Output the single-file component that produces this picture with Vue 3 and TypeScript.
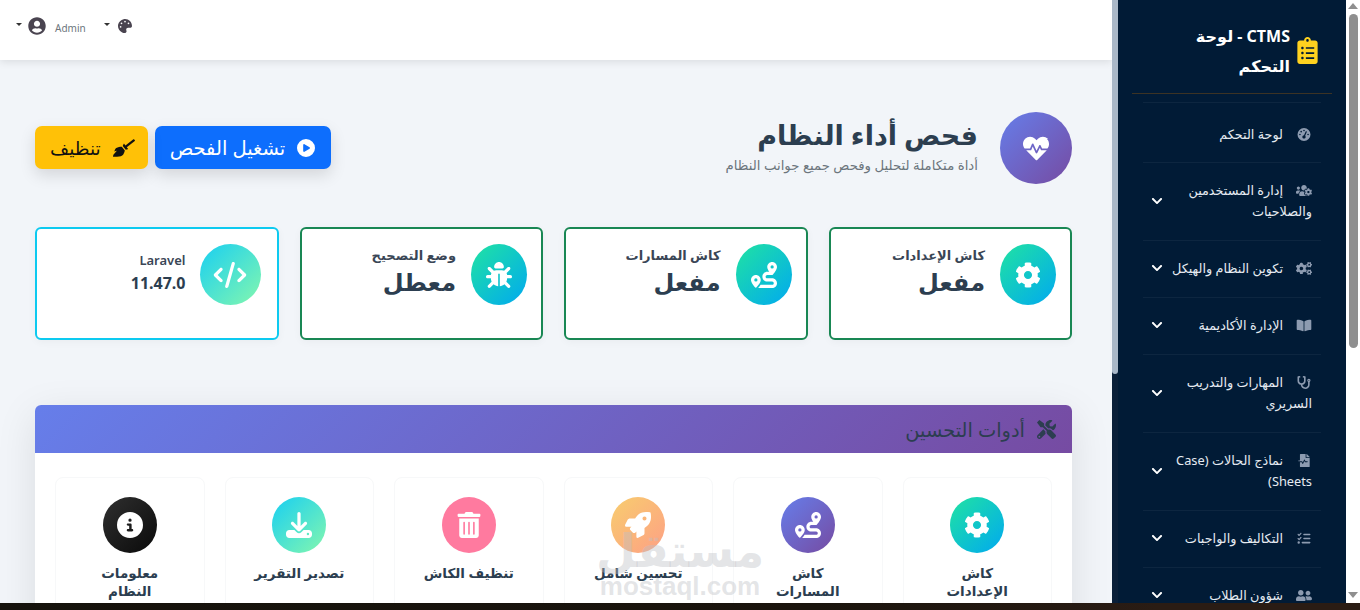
<script setup lang="ts">
interface Icon {
    vb: string;
    d: string;
}

const icons: Record<string, Icon> = {
    user: { vb: '0 0 496 512', d: 'M248 8C111 8 0 119 0 256s111 248 248 248 248-111 248-248S385 8 248 8zm0 96c48.6 0 88 39.4 88 88s-39.4 88-88 88-88-39.4-88-88 39.4-88 88-88zm0 344c-58.7 0-111.3-26.6-146.5-68.2 18.8-35.4 55.6-59.8 98.5-59.8 2.4 0 4.8.4 7.1 1.1 13 4.2 26.6 6.9 40.9 6.9 14.3 0 28-2.7 40.9-6.9 2.3-.7 4.7-1.1 7.1-1.1 42.9 0 79.7 24.4 98.5 59.8C359.3 421.4 306.7 448 248 448z' },
    palette: { vb: '0 0 512 512', d: 'M204.3 5C104.9 24.4 24.8 104.3 5.2 203.4c-37 187 131.7 326.4 258.8 306.7 41.2-6.4 61.4-54.6 42.5-91.7-23.1-45.4 9.9-98.4 60.9-98.4h79.7c35.8 0 64.8-29.6 64.9-65.3C511.5 97.1 368.1-26.9 204.3 5zM96 320c-17.7 0-32-14.3-32-32s14.3-32 32-32 32 14.3 32 32-14.3 32-32 32zm32-128c-17.7 0-32-14.3-32-32s14.3-32 32-32 32 14.3 32 32-14.3 32-32 32zm128-64c-17.7 0-32-14.3-32-32s14.3-32 32-32 32 14.3 32 32-14.3 32-32 32zm128 64c-17.7 0-32-14.3-32-32s14.3-32 32-32 32 14.3 32 32-14.3 32-32 32z' },
    play: { vb: '0 0 512 512', d: 'M0 256a256 256 0 1 1 512 0A256 256 0 1 1 0 256zM188.3 147.1c-7.6 4.2-12.3 12.3-12.3 20.9V344c0 8.7 4.7 16.7 12.3 20.9s16.8 4.1 24.3-.5l144-88c7.1-4.4 11.5-12.1 11.5-20.5s-4.4-16.1-11.5-20.5l-144-88c-7.4-4.5-16.7-4.7-24.3-.5z' },
    broom: { vb: '0 0 640 512', d: 'M256.47 216.77l86.73 109.18s-16.6 102.36-76.57 150.12C206.66 523.85 0 510.19 0 510.19s3.8-23.14 11-55.43l94.62-112.17c3.97-4.7-.87-11.62-6.65-9.5l-60.4 22.09c14.44-41.66 32.72-80.04 54.6-97.47 59.97-47.76 163.3-40.94 163.3-40.94zM636.53 31.03l-19.86-25c-5.49-6.9-15.52-8.05-22.41-2.56l-232.48 177.8-34.14-42.97c-5.09-6.41-15.14-5.21-18.59 2.21l-25.33 54.55 86.73 109.18 58.8-12.45c8-1.69 11.42-11.2 6.34-17.6l-34.09-42.92 232.48-177.8c6.89-5.48 8.04-15.53 2.55-22.44z' },
    heartbeat: { vb: '0 0 512 512', d: 'M320.2 243.8l-49.7 99.4c-6 12.1-23.4 11.7-28.9-.6l-56.9-126.3-30 71.7H60.6l182.5 186.5c7.1 7.3 18.6 7.3 25.7 0L451.4 288H342.3l-22.1-44.2zM473.7 73.9l-2.4-2.5c-51.5-52.6-135.8-52.6-187.4 0L256 100l-27.9-28.5c-51.5-52.7-135.9-52.7-187.4 0l-2.4 2.4C-10.4 123.7-12.5 203 31 256h102.4l35.9-86.2c5.4-12.9 23.6-13.2 29.4-.4l58.2 129.3 49-97.9c5.9-11.8 22.7-11.8 28.6 0l27.6 55.2h100.5c43.4-53 41.3-132.3-7.9-182.1z' },
    cog: { vb: '0 0 512 512', d: 'M487.4 315.7l-42.6-24.6c4.3-23.2 4.3-47 0-70.2l42.6-24.6c4.9-2.8 7.1-8.6 5.5-14-11.1-35.6-30-67.8-54.7-94.6-3.8-4.1-10-5.1-14.8-2.3L380.8 110c-17.9-15.4-38.5-27.3-60.8-35.1V25.8c0-5.6-3.9-10.5-9.4-11.7-36.7-8.2-74.3-7.8-109.2 0-5.5 1.2-9.4 6.1-9.4 11.7V75c-22.2 7.9-42.8 19.8-60.8 35.1L88.7 85.5c-4.9-2.8-11-1.9-14.8 2.3-24.7 26.7-43.6 58.9-54.7 94.6-1.7 5.4.6 11.2 5.5 14L67.3 221c-4.3 23.2-4.3 47 0 70.2l-42.6 24.6c-4.9 2.8-7.1 8.6-5.5 14 11.1 35.6 30 67.8 54.7 94.6 3.8 4.1 10 5.1 14.8 2.3l42.6-24.6c17.9 15.4 38.5 27.3 60.8 35.1v49.2c0 5.6 3.9 10.5 9.4 11.7 36.7 8.2 74.3 7.8 109.2 0 5.5-1.2 9.4-6.1 9.4-11.7v-49.2c22.2-7.9 42.8-19.8 60.8-35.1l42.6 24.6c4.9 2.8 11 1.9 14.8-2.3 24.7-26.7 43.6-58.9 54.7-94.6 1.5-5.5-.7-11.3-5.6-14.1zM256 336c-44.1 0-80-35.9-80-80s35.9-80 80-80 80 35.9 80 80-35.9 80-80 80z' },
    route: { vb: '0 0 512 512', d: 'M512 96c0 50.2-59.1 125.1-84.6 155c-3.8 4.4-9.4 6.1-14.5 5H320c-17.7 0-32 14.3-32 32s14.3 32 32 32h96c53 0 96 43 96 96s-43 96-96 96H139.6c8.7-9.9 19.3-22.6 30-36.8c6.3-8.4 12.8-17.6 19-27.2H416c17.7 0 32-14.3 32-32s-14.3-32-32-32H320c-53 0-96-43-96-96s43-96 96-96h39.8c-21-31.5-39.8-67.7-39.8-96c0-53 43-96 96-96s96 43 96 96zM117.1 489.1c-3.8 4.3-7.2 8.1-10.1 11.3l-1.8 2-.2-.2c-6 4.6-14.6 4-20-1.8C59.8 473 0 402.5 0 352c0-53 43-96 96-96s96 43 96 96c0 30-21.1 67-43.5 97.9c-10.7 14.7-21.7 28-30.8 38.5l-.6 .7zM128 352a32 32 0 1 0 -64 0 32 32 0 1 0 64 0zM416 128a32 32 0 1 0 0-64 32 32 0 1 0 0 64z' },
    bug: { vb: '0 0 512 512', d: 'M256 0c53 0 96 43 96 96v3.6c0 15.7-12.7 28.4-28.4 28.4H188.4c-15.7 0-28.4-12.7-28.4-28.4V96c0-53 43-96 96-96zM41.4 105.4c12.5-12.5 32.8-12.5 45.3 0l64 64c.7 .7 1.3 1.4 1.9 2.1c14.2-7.3 30.4-11.4 47.5-11.4H312c17.1 0 33.2 4.1 47.5 11.4c.6-.7 1.2-1.4 1.9-2.1l64-64c12.5-12.5 32.8-12.5 45.3 0s12.5 32.8 0 45.3l-64 64c-.7 .7-1.4 1.3-2.1 1.9c6.2 12 10.1 25.3 11.1 39.5H480c17.7 0 32 14.3 32 32s-14.3 32-32 32H416c0 24.6-5.5 47.8-15.4 68.6c2.2 1.3 4.2 2.9 6 4.8l64 64c12.5 12.5 12.5 32.8 0 45.3s-32.8 12.5-45.3 0l-63.1-63.1c-24.5 21.8-55.8 36.2-90.3 39.6V240c0-8.8-7.2-16-16-16s-16 7.2-16 16V479.2c-34.5-3.4-65.8-17.8-90.3-39.6L86.6 502.6c-12.5 12.5-32.8 12.5-45.3 0s-12.5-32.8 0-45.3l64-64c1.9-1.9 3.9-3.4 6-4.8C101.5 367.8 96 344.6 96 320H32c-17.7 0-32-14.3-32-32s14.3-32 32-32H96.3c1.1-14.1 5-27.5 11.1-39.5c-.7-.6-1.4-1.2-2.1-1.9l-64-64c-12.5-12.5-12.5-32.8 0-45.3z' },
    code: { vb: '0 0 640 512', d: 'M392.8 1.2c-17-4.9-34.7 5-39.6 22l-128 448c-4.9 17 5 34.7 22 39.6s34.7-5 39.6-22l128-448c4.9-17-5-34.7-22-39.6zm80.6 120.1c-12.5 12.5-12.5 32.8 0 45.3L562.7 256l-89.4 89.4c-12.5 12.5-12.5 32.8 0 45.3s32.8 12.5 45.3 0l112-112c12.5-12.5 12.5-32.8 0-45.3l-112-112c-12.5-12.5-32.8-12.5-45.3 0zm-306.7 0c-12.5-12.5-32.8-12.5-45.3 0l-112 112c-12.5 12.5-12.5 32.8 0 45.3l112 112c12.5 12.5 32.8 12.5 45.3 0s12.5-32.8 0-45.3L77.3 256l89.4-89.4c12.5-12.5 12.5-32.8 0-45.3z' },
    tools: { vb: '0 0 512 512', d: 'M501.1 395.7L384 278.6c-23.1-23.1-57.6-27.6-85.4-13.9L192 158.1V96L64 0 0 64l96 128h62.1l106.6 106.6c-13.6 27.8-9.2 62.3 13.9 85.4l117.1 117.1c14.6 14.6 38.2 14.6 52.7 0l52.7-52.7c14.5-14.6 14.5-38.2 0-52.7zM331.7 225c28.3 0 54.9 11 74.9 31l19.4 19.4c15.8-6.9 30.8-16.5 43.8-29.5 37.1-37.1 49.7-89.3 37.9-136.7-2.2-9-13.5-12.1-20.1-5.5l-74.4 74.4-67.9-11.3L334 98.9l74.4-74.4c6.6-6.6 3.4-17.9-5.7-20.2-47.4-11.7-99.6.9-136.6 37.9-28.5 28.5-41.9 66.1-41.2 103.6l82.1 82.1c8.1-1.9 16.5-2.9 24.7-2.9zm-103.9 82l-56.7-56.7L18.7 402.8c-25 25-25 65.5 0 90.5s65.5 25 90.5 0l123.6-123.6c-7.6-19.9-9.9-41.6-5-62.7zM64 472c-13.2 0-24-10.8-24-24 0-13.3 10.7-24 24-24s24 10.7 24 24c0 13.2-10.7 24-24 24z' },
    rocket: { vb: '0 0 512 512', d: 'M505.12019,19.09375c-1.18945-5.53125-6.65819-11-12.207-12.1875C460.716,0,435.507,0,410.40747,0,307.17523,0,245.26909,55.20312,199.05238,128H94.83772c-16.34763.01562-35.55658,11.875-42.88664,26.48438L2.51562,253.29688A28.4,28.4,0,0,0,0,264a24.00867,24.00867,0,0,0,24.00582,24H127.81618l-22.47457,22.46875c-11.36521,11.36133-12.99607,32.25781,0,45.25L156.24582,406.625c11.15623,11.1875,32.15619,13.15625,45.27726,0l22.47457-22.46875V488a24.00867,24.00867,0,0,0,24.00581,24,28.55934,28.55934,0,0,0,10.707-2.51562l98.72834-49.39063c14.62888-7.29687,26.50776-26.5,26.50776-42.85937V312.79688c72.59753-46.3125,128.03493-108.40626,128.03493-211.09376C512.07526,76.5,512.07526,51.29688,505.12019,19.09375ZM384.04033,168A40,40,0,1,1,424.05,128,40.02322,40.02322,0,0,1,384.04033,168Z' },
    trash: { vb: '0 0 448 512', d: 'M32 464a48 48 0 0 0 48 48h288a48 48 0 0 0 48-48V128H32zm272-256a16 16 0 0 1 32 0v224a16 16 0 0 1-32 0zm-96 0a16 16 0 0 1 32 0v224a16 16 0 0 1-32 0zm-96 0a16 16 0 0 1 32 0v224a16 16 0 0 1-32 0zM432 32H312l-9.4-18.7A24 24 0 0 0 281.1 0H166.8a23.72 23.72 0 0 0-21.4 13.3L136 32H16A16 16 0 0 0 0 48v32a16 16 0 0 0 16 16h416a16 16 0 0 0 16-16V48a16 16 0 0 0-16-16z' },
    download: { vb: '0 0 512 512', d: 'M288 32c0-17.7-14.3-32-32-32s-32 14.3-32 32V274.7l-73.4-73.4c-12.5-12.5-32.8-12.5-45.3 0s-12.5 32.8 0 45.3l128 128c12.5 12.5 32.8 12.5 45.3 0l128-128c12.5-12.5 12.5-32.8 0-45.3s-32.8-12.5-45.3 0L288 274.7V32zM64 352c-35.3 0-64 28.7-64 64v32c0 35.3 28.7 64 64 64H448c35.3 0 64-28.7 64-64V416c0-35.3-28.7-64-64-64H346.5l-45.3 45.3c-25 25-65.5 25-90.5 0L165.5 352H64zm368 56a24 24 0 1 1 0 48 24 24 0 1 1 0-48z' },
    info: { vb: '0 0 512 512', d: 'M256 512A256 256 0 1 0 256 0a256 256 0 1 0 0 512zM216 336h24V272H216c-13.3 0-24-10.7-24-24s10.7-24 24-24h48c13.3 0 24 10.7 24 24v88h8c13.3 0 24 10.7 24 24s-10.7 24-24 24H216c-13.3 0-24-10.7-24-24s10.7-24 24-24zm40-208a32 32 0 1 1 0 64 32 32 0 1 1 0-64z' },
    clipboard: { vb: '0 0 384 512', d: 'M336 64h-80c0-35.3-28.7-64-64-64s-64 28.7-64 64H48C21.5 64 0 85.5 0 112v352c0 26.5 21.5 48 48 48h288c26.5 0 48-21.5 48-48V112c0-26.5-21.5-48-48-48zM96 424c-13.3 0-24-10.7-24-24s10.7-24 24-24 24 10.7 24 24-10.7 24-24 24zm0-96c-13.3 0-24-10.7-24-24s10.7-24 24-24 24 10.7 24 24-10.7 24-24 24zm0-96c-13.3 0-24-10.7-24-24s10.7-24 24-24 24 10.7 24 24-10.7 24-24 24zm96-192c13.3 0 24 10.7 24 24s-10.7 24-24 24-24-10.7-24-24 10.7-24 24-24zm128 368c0 4.4-3.6 8-8 8H168c-4.4 0-8-3.6-8-8v-16c0-4.4 3.6-8 8-8h144c4.4 0 8 3.6 8 8v16zm0-96c0 4.4-3.6 8-8 8H168c-4.4 0-8-3.6-8-8v-16c0-4.4 3.6-8 8-8h144c4.4 0 8 3.6 8 8v16zm0-96c0 4.4-3.6 8-8 8H168c-4.4 0-8-3.6-8-8v-16c0-4.4 3.6-8 8-8h144c4.4 0 8 3.6 8 8v16z' },
    gauge: { vb: '0 0 512 512', d: 'M0 256a256 256 0 1 1 512 0A256 256 0 1 1 0 256zM288 96a32 32 0 1 0 -64 0 32 32 0 1 0 64 0zM256 416c35.3 0 64-28.7 64-64c0-17.4-6.9-33.1-18.1-44.6L366 161.7c5.3-12.1-.2-26.3-12.3-31.6s-26.3 .2-31.6 12.3L257.9 288c-.6 0-1.3 0-1.9 0c-35.3 0-64 28.7-64 64s28.7 64 64 64zM176 144a32 32 0 1 0 -64 0 32 32 0 1 0 64 0zM96 288a32 32 0 1 0 0-64 32 32 0 1 0 0 64zm352-32a32 32 0 1 0 -64 0 32 32 0 1 0 64 0z' },
    usersCog: { vb: '0 0 640 512', d: 'M610.5 341.3c2.6-14.1 2.6-28.5 0-42.6l25.8-14.9c3-1.7 4.3-5.2 3.3-8.5-6.7-21.5-18.2-41-33.2-57.1-2.3-2.5-6-3.1-9-1.4l-25.8 14.9c-10.9-9.3-23.4-16.5-36.9-21.3v-29.8c0-3.4-2.4-6.4-5.7-7.1-22.3-5-45-4.8-66.2 0-3.3.7-5.7 3.7-5.7 7.1v29.8c-13.5 4.8-26 12-36.9 21.3l-25.8-14.9c-2.9-1.7-6.7-1.1-9 1.4-15 16.1-26.5 35.6-33.2 57.1-1 3.3.4 6.8 3.3 8.5l25.8 14.9c-2.6 14.1-2.6 28.5 0 42.6l-25.8 14.9c-3 1.7-4.3 5.2-3.3 8.5 6.7 21.5 18.2 41 33.2 57.1 2.3 2.5 6 3.1 9 1.4l25.8-14.9c10.9 9.3 23.4 16.5 36.9 21.3v29.8c0 3.4 2.4 6.4 5.7 7.1 22.3 5 45 4.8 66.2 0 3.3-.7 5.7-3.7 5.7-7.1v-29.8c13.5-4.8 26-12 36.9-21.3l25.8 14.9c2.9 1.7 6.7 1.1 9-1.4 15-16.1 26.5-35.6 33.2-57.1 1-3.3-.4-6.8-3.3-8.5l-25.8-14.9zM496 368.5c-26.8 0-48.5-21.8-48.5-48.5s21.8-48.5 48.5-48.5 48.5 21.8 48.5 48.5-21.7 48.5-48.5 48.5zM96 224c35.3 0 64-28.7 64-64s-28.7-64-64-64-64 28.7-64 64 28.7 64 64 64zm224 32c1.9 0 3.7-.5 5.6-.6 8.3-21.7 20.5-42.1 36.3-59.2 7.4-8 17.9-12.6 28.9-12.6 6.9 0 13.7 1.8 19.6 5.3l7.9 4.6c.8-.5 1.6-.9 2.4-1.4 7-14.6 11.2-30.8 11.2-48 0-61.9-50.1-112-112-112S208 82.1 208 144c0 61.9 50.1 112 112 112zm105.2 194.5c-2.3-1.2-4.6-2.6-6.8-3.9-8.2 4.8-15.3 9.8-27.5 9.8-10.9 0-21.4-4.6-28.9-12.6-18.3-19.8-32.3-43.9-40.2-69.6-10.7-34.5 24.9-49.7 25.8-50.3-.1-2.6-.1-5.2 0-7.8l-7.9-4.6c-3.8-2.2-7-5-9.8-8.1-3.3.2-6.5.6-9.8.6-24.6 0-47.6-6-68.5-16h-8.3C179.6 288 128 339.6 128 403.2V432c0 26.5 21.5 48 48 48h255.4c-3.7-6-6.2-12.8-6.2-20.3v-9.2zM173.1 274.6C161.5 263.1 145.6 256 128 256H64c-35.3 0-64 28.7-64 64v32c0 17.7 14.3 32 32 32h65.9c6.3-47.4 34.9-87.3 75.2-109.4z' },
    cogs: { vb: '0 0 640 512', d: 'M512.1 191l-8.2 14.3c-3 5.3-9.4 7.5-15.1 5.4-11.8-4.4-22.6-10.7-32.1-18.6-4.6-3.8-5.8-10.5-2.8-15.7l8.2-14.3c-6.9-8-12.3-17.3-15.9-27.4h-16.5c-6 0-11.2-4.3-12.2-10.3-2-12-2.1-24.6 0-37.1 1-6 6.2-10.4 12.2-10.4h16.5c3.6-10.1 9-19.4 15.9-27.4l-8.2-14.3c-3-5.2-1.9-11.9 2.8-15.7 9.5-7.9 20.4-14.2 32.1-18.6 5.7-2.1 12.1.1 15.1 5.4l8.2 14.3c10.5-1.9 21.2-1.9 31.7 0L552 6.3c3-5.3 9.4-7.5 15.1-5.4 11.8 4.4 22.6 10.7 32.1 18.6 4.6 3.8 5.8 10.5 2.8 15.7l-8.2 14.3c6.9 8 12.3 17.3 15.9 27.4h16.5c6 0 11.2 4.3 12.2 10.3 2 12 2.1 24.6 0 37.1-1 6-6.2 10.4-12.2 10.4h-16.5c-3.6 10.1-9 19.4-15.9 27.4l8.2 14.3c3 5.2 1.9 11.9-2.8 15.7-9.5 7.9-20.4 14.2-32.1 18.6-5.7 2.1-12.1-.1-15.1-5.4l-8.2-14.3c-10.4 1.9-21.2 1.9-31.7 0zm-10.5-58.8c38.5 29.6 82.4-14.3 52.8-52.8-38.5-29.7-82.4 14.3-52.8 52.8zM386.3 286.1l33.7 16.8c10.1 5.8 14.5 18.1 10.5 29.1-8.9 24.2-26.4 46.4-42.6 65.8-7.4 8.9-20.2 11.1-30.3 5.3l-29.1-16.8c-16 13.7-34.6 24.6-54.9 31.7v33.6c0 11.6-8.3 21.6-19.7 23.6-24.6 4.2-50.4 4.4-75.9 0-11.5-2-20-11.9-20-23.6V418c-20.3-7.2-38.9-18-54.9-31.7L74 403c-10 5.8-22.9 3.6-30.3-5.3-16.2-19.4-33.3-41.6-42.2-65.7-4-10.9.4-23.2 10.5-29.1l33.3-16.8c-3.9-20.9-3.9-42.4 0-63.4L12 205.8c-10.1-5.8-14.6-18.1-10.5-29 8.9-24.2 26-46.4 42.2-65.8 7.4-8.9 20.2-11.1 30.3-5.3l29.1 16.8c16-13.7 34.6-24.6 54.9-31.7V57.1c0-11.5 8.2-21.5 19.6-23.5 24.6-4.2 50.5-4.4 76-.1 11.5 2 20 11.9 20 23.6v33.6c20.3 7.2 38.9 18 54.9 31.7l29.1-16.8c10-5.8 22.9-3.6 30.3 5.3 16.2 19.4 33.2 41.6 42.1 65.8 4 10.9.1 23.2-10 29.1l-33.7 16.8c3.9 21 3.9 42.5 0 63.5zm-117.6 21.1c59.2-77-28.7-164.9-105.7-105.7-59.2 77 28.7 164.9 105.7 105.7zm243.4 182.7l-8.2 14.3c-3 5.3-9.4 7.5-15.1 5.4-11.8-4.4-22.6-10.7-32.1-18.6-4.6-3.8-5.8-10.5-2.8-15.7l8.2-14.3c-6.9-8-12.3-17.3-15.9-27.4h-16.5c-6 0-11.2-4.3-12.2-10.3-2-12-2.1-24.6 0-37.1 1-6 6.2-10.4 12.2-10.4h16.5c3.6-10.1 9-19.4 15.9-27.4l-8.2-14.3c-3-5.2-1.9-11.9 2.8-15.7 9.5-7.9 20.4-14.2 32.1-18.6 5.7-2.1 12.1.1 15.1 5.4l8.2 14.3c10.5-1.9 21.2-1.9 31.7 0l8.2-14.3c3-5.3 9.4-7.5 15.1-5.4 11.8 4.4 22.6 10.7 32.1 18.6 4.6 3.8 5.8 10.5 2.8 15.7l-8.2 14.3c6.9 8 12.3 17.3 15.9 27.4h16.5c6 0 11.2 4.3 12.2 10.3 2 12 2.1 24.6 0 37.1-1 6-6.2 10.4-12.2 10.4h-16.5c-3.6 10.1-9 19.4-15.9 27.4l8.2 14.3c3 5.2 1.9 11.9-2.8 15.7-9.5 7.9-20.4 14.2-32.1 18.6-5.7 2.1-12.1-.1-15.1-5.4l-8.2-14.3c-10.4 1.9-21.2 1.9-31.7 0zM501.6 431c38.5 29.6 82.4-14.3 52.8-52.8-38.5-29.6-82.4 14.3-52.8 52.8z' },
    book: { vb: '0 0 576 512', d: 'M542.22 32.05c-54.8 3.11-163.72 14.43-230.96 55.59-4.64 2.84-7.27 7.89-7.27 13.17v363.87c0 11.55 12.63 18.85 23.28 13.49 69.18-34.82 169.23-44.32 218.7-46.92 16.89-.89 30.02-14.43 30.02-30.66V62.75c.01-17.71-15.35-31.74-33.77-30.7zM264.73 87.64C197.5 46.48 88.58 35.17 33.78 32.05 15.36 31.01 0 45.04 0 62.75V400.6c0 16.24 13.13 29.78 30.02 30.66 49.49 2.6 149.59 12.11 218.77 46.95 10.62 5.35 23.21-1.94 23.21-13.46V100.63c0-5.29-2.62-10.14-7.27-12.99z' },
    stethoscope: { vb: '0 0 512 512', d: 'M447.1 112c-34.2.5-62.3 28.4-63 62.6-.5 24.3 12.5 45.6 32 56.8V344c0 57.3-50.2 104-112 104-60 0-109.2-44.1-111.9-99.2C265 333.8 320 269.2 320 192V36.6c0-11.4-8.1-21.3-19.3-23.5L237.8.5c-13-2.6-25.6 5.8-28.2 18.8L206.4 35c-2.6 13 5.8 25.6 18.8 28.2l30.7 6.1v121.4c0 52.9-42.2 96.7-95.1 97.2-53.4.5-96.9-42.7-96.9-96V69.4l30.7-6.1c13-2.6 21.4-15.2 18.8-28.2l-3.1-15.7C107.7 6.4 95.1-2 82.1.6L19.3 13C8.1 15.3 0 25.1 0 36.6V192c0 77.3 55.1 142 128.1 156.8C130.7 439.2 208.6 512 304 512c97 0 176-75.4 176-168V231.4c19.1-11.1 32-31.7 32-55.4 0-35.7-29.2-64.5-64.9-64zm.9 80c-8.8 0-16-7.2-16-16s7.2-16 16-16 16 7.2 16 16-7.2 16-16 16z' },
    fileMedical: { vb: '0 0 448 512', d: 'M288 136V0H88C74.7 0 64 10.7 64 24v232H8c-4.4 0-8 3.6-8 8v16c0 4.4 3.6 8 8 8h140.9c3 0 5.8 1.7 7.2 4.4l19.9 39.8 56.8-113.7c2.9-5.9 11.4-5.9 14.3 0l34.7 69.5H352c8.8 0 16 7.2 16 16s-7.2 16-16 16h-89.9L240 275.8l-56.8 113.7c-2.9 5.9-11.4 5.9-14.3 0L134.1 320H64v168c0 13.3 10.7 24 24 24h336c13.3 0 24-10.7 24-24V160H312c-13.2 0-24-10.8-24-24zm153-31L343.1 7c-4.5-4.5-10.6-7-17-7H320v128h128v-6.1c0-6.3-2.5-12.4-7-16.9z' },
    tasks: { vb: '0 0 512 512', d: 'M152.1 38.2c9.9 8.9 10.7 24 1.8 33.9l-72 80c-4.4 4.9-10.6 7.8-17.2 7.9s-12.9-2.4-17.6-7L7 113C-2.3 103.6-2.3 88.4 7 79s24.6-9.4 33.9 0l22.1 22.1 55.1-61.2c8.9-9.9 24-10.7 33.9-1.8zm0 160c9.9 8.9 10.7 24 1.8 33.9l-72 80c-4.4 4.9-10.6 7.8-17.2 7.9s-12.9-2.4-17.6-7L7 273c-9.4-9.4-9.4-24.6 0-33.9s24.6-9.4 33.9 0l22.1 22.1 55.1-61.2c8.9-9.9 24-10.7 33.9-1.8zM224 96c0-17.7 14.3-32 32-32H480c17.7 0 32 14.3 32 32s-14.3 32-32 32H256c-17.7 0-32-14.3-32-32zm0 160c0-17.7 14.3-32 32-32H480c17.7 0 32 14.3 32 32s-14.3 32-32 32H256c-17.7 0-32-14.3-32-32zM160 416c0-17.7 14.3-32 32-32H480c17.7 0 32 14.3 32 32s-14.3 32-32 32H192c-17.7 0-32-14.3-32-32zM48 368a48 48 0 1 1 0 96 48 48 0 1 1 0-96z' },
    friends: { vb: '0 0 640 512', d: 'M192 256c61.9 0 112-50.1 112-112S253.9 32 192 32 80 82.1 80 144s50.1 112 112 112zm76.8 32h-8.3c-20.8 10-43.9 16-68.5 16s-47.6-6-68.5-16h-8.3C51.6 288 0 339.6 0 403.2V432c0 26.5 21.5 48 48 48h288c26.5 0 48-21.5 48-48v-28.8c0-63.6-51.6-115.2-115.2-115.2zM480 256c53 0 96-43 96-96s-43-96-96-96-96 43-96 96 43 96 96 96zm48 32h-3.8c-13.9 4.8-28.6 8-44.2 8s-30.3-3.2-44.2-8H432c-20.4 0-39.2 5.9-55.7 15.4 24.4 26.3 39.7 61.2 39.7 99.8v38.4c0 2.2-.5 4.3-.6 6.4H592c26.5 0 48-21.5 48-48 0-61.9-50.1-112-112-112z' },
    chevron: { vb: '0 0 448 512', d: 'M207.029 381.476L12.686 187.132c-9.373-9.373-9.373-24.569 0-33.941l22.667-22.667c9.357-9.357 24.522-9.375 33.901-.04L224 284.505l154.745-154.021c9.379-9.335 24.544-9.317 33.901.04l22.667 22.667c9.373 9.373 9.373 24.569 0 33.941L240.971 381.476c-9.373 9.372-24.569 9.372-33.942 0z' },
};

const statusCards = [
    { label: 'كاش الإعدادات', value: 'مفعل', icon: 'cog', tone: 'green' },
    { label: 'كاش المسارات', value: 'مفعل', icon: 'route', tone: 'green' },
    { label: 'وضع التصحيح', value: 'معطل', icon: 'bug', tone: 'green' },
    { label: 'Laravel', value: '11.47.0', icon: 'code', tone: 'cyan' },
];

const tools = [
    { lines: ['كاش', 'الإعدادات'], icon: 'cog', tone: 'green' },
    { lines: ['كاش', 'المسارات'], icon: 'route', tone: 'purple' },
    { lines: ['تحسين شامل'], icon: 'rocket', tone: 'orange' },
    { lines: ['تنظيف الكاش'], icon: 'trash', tone: 'pink' },
    { lines: ['تصدير التقرير'], icon: 'download', tone: 'cyan' },
    { lines: ['معلومات', 'النظام'], icon: 'info', tone: 'dark' },
];

const menu = [
    { label: 'لوحة التحكم', icon: 'gauge', arrow: false },
    { label: 'إدارة المستخدمين\nوالصلاحيات', icon: 'usersCog', arrow: true },
    { label: 'تكوين النظام والهيكل', icon: 'cogs', arrow: true },
    { label: 'الإدارة الأكاديمية', icon: 'book', arrow: true },
    { label: 'المهارات والتدريب\nالسريري', icon: 'stethoscope', arrow: true },
    { label: 'نماذج الحالات (Case\nSheets)', icon: 'fileMedical', arrow: true },
    { label: 'التكاليف والواجبات', icon: 'tasks', arrow: true },
    { label: 'شؤون الطلاب', icon: 'friends', arrow: true },
];

function rowHeight(label: string, index: number) {
    if (index === 0) return '60px';
    return label.includes('\n') ? '78px' : '57px';
}
</script>

<template>
    <div class="screen">
        <div class="window">
            <main class="main">
                <header class="topbar">
                    <span class="caret"></span>
                    <svg class="topbar__user" :viewBox="icons.user.vb"><path :d="icons.user.d" /></svg>
                    <span class="topbar__name">Admin</span>
                    <span class="caret caret--second"></span>
                    <svg class="topbar__palette" :viewBox="icons.palette.vb"><path :d="icons.palette.d" /></svg>
                </header>

                <div class="content" dir="rtl">
                    <section class="pageHead">
                        <div class="pageHead__title">
                            <div class="pageHead__badge">
                                <svg :viewBox="icons.heartbeat.vb"><path :d="icons.heartbeat.d" /></svg>
                            </div>
                            <div class="pageHead__text">
                                <h1>فحص أداء النظام</h1>
                                <p>أداة متكاملة لتحليل وفحص جميع جوانب النظام</p>
                            </div>
                        </div>
                        <div class="pageHead__actions">
                            <button class="btn btn--blue">
                                <svg :viewBox="icons.play.vb"><path :d="icons.play.d" /></svg>
                                تشغيل الفحص
                            </button>
                            <button class="btn btn--yellow">
                                <svg class="btn__broom" :viewBox="icons.broom.vb"><path :d="icons.broom.d" /></svg>
                                تنظيف
                            </button>
                        </div>
                    </section>

                    <section class="stats">
                        <div
                            v-for="card in statusCards"
                            :key="card.label"
                            class="stat"
                            :class="'stat--' + card.tone"
                        >
                            <div class="stat__icon">
                                <svg :viewBox="icons[card.icon].vb"><path :d="icons[card.icon].d" /></svg>
                            </div>
                            <div class="stat__text">
                                <div class="stat__label">{{ card.label }}</div>
                                <div class="stat__value">{{ card.value }}</div>
                            </div>
                        </div>
                    </section>

                    <section class="panel">
                        <div class="panel__head">
                            <svg :viewBox="icons.tools.vb"><path :d="icons.tools.d" /></svg>
                            <h2>أدوات التحسين</h2>
                        </div>
                        <div class="panel__body">
                            <div v-for="tool in tools" :key="tool.icon + tool.tone" class="tool">
                                <div class="tool__icon" :class="'tool__icon--' + tool.tone">
                                    <svg :viewBox="icons[tool.icon].vb"><path :d="icons[tool.icon].d" /></svg>
                                </div>
                                <div class="tool__label">
                                    <span v-for="line in tool.lines" :key="line">{{ line }}</span>
                                </div>
                            </div>
                        </div>
                    </section>
                </div>

                <div class="watermark">
                    <span class="watermark__ar" dir="rtl">مستقل</span>
                    <span class="watermark__en">mostaql.com</span>
                </div>
            </main>

            <div class="sideScroll"><div class="sideScroll__thumb"></div></div>

            <aside class="sidebar" dir="rtl">
                <div class="brand">
                    <svg :viewBox="icons.clipboard.vb"><path :d="icons.clipboard.d" /></svg>
                    <div class="brand__name">CTMS - لوحة<br />التحكم</div>
                </div>
                <nav class="menu">
                    <div
                        v-for="(item, index) in menu"
                        :key="item.icon"
                        class="menu__item"
                        :style="{ height: rowHeight(item.label, index) }"
                    >
                        <div class="menu__text">
                            <svg class="menu__icon" :viewBox="icons[item.icon].vb"><path :d="icons[item.icon].d" /></svg>{{ item.label }}
                        </div>
                        <svg v-if="item.arrow" class="menu__arrow" :viewBox="icons.chevron.vb"><path :d="icons.chevron.d" /></svg>
                    </div>
                </nav>
            </aside>

            <div class="pageScroll">
                <span class="pageScroll__up"></span>
                <div class="pageScroll__thumb"></div>
                <span class="pageScroll__down"></span>
            </div>
        </div>
        <div class="strip"></div>
    </div>
</template>

<style scoped>
.screen {
    width: 1360px;
    height: 610px;
    display: flex;
    flex-direction: column;
    overflow: hidden;
    font-family: "Noto Sans", "DejaVu Sans", sans-serif;
    color: #2c3e50;
}

.window {
    height: 603px;
    display: flex;
}

.strip {
    height: 7px;
    background: linear-gradient(90deg, #15120c 0%, #1a140d 60%, #2a1c14 85%, #2a1c14 100%);
}

.main {
    position: relative;
    width: 1112px;
    flex-shrink: 0;
    overflow: hidden;
    background: #f2f5f9;
}

.topbar {
    height: 60px;
    box-sizing: border-box;
    padding: 0 0 8px 16px;
    display: flex;
    align-items: center;
    background: #fff;
    box-shadow: 0 2px 8px rgba(0, 0, 0, 0.1);
}

.caret {
    width: 0;
    height: 0;
    border-top: 3.5px solid #333;
    border-left: 3.5px solid transparent;
    border-right: 3.5px solid transparent;
    margin-bottom: 3px;
}

.caret--second {
    margin-left: 18px;
}

.topbar__user {
    width: 18px;
    height: 18px;
    margin-left: 6px;
    fill: #4a4450;
}

.topbar__name {
    margin: 3px 0 0 9px;
    font-size: 10px;
    color: #6c757d;
}

.topbar__palette {
    width: 14px;
    height: 14px;
    margin-left: 8px;
    fill: #4a4450;
}

.content {
    padding: 52px 40px 0 35px;
}

.pageHead {
    display: flex;
    justify-content: space-between;
    align-items: center;
}

.pageHead__title {
    display: flex;
    align-items: center;
    gap: 22px;
}

.pageHead__badge {
    width: 72px;
    height: 72px;
    border-radius: 50%;
    display: flex;
    align-items: center;
    justify-content: center;
    background: linear-gradient(135deg, #667eea, #764ba2);
}

.pageHead__badge svg {
    width: 27px;
    height: 27px;
    fill: #fff;
}

.pageHead__text {
    padding-bottom: 8px;
}

h1 {
    margin: 0 0 2px;
    font-size: 27px;
    line-height: 40px;
    font-weight: 700;
    color: #2c3e50;
}

.pageHead p {
    margin: 0;
    font-size: 13.3px;
    line-height: 16px;
    color: #6c757d;
}

.pageHead__actions {
    display: flex;
    gap: 7px;
    padding-bottom: 1px;
}

.btn {
    height: 43px;
    padding: 0 16px 0 15px;
    display: flex;
    align-items: center;
    gap: 12px;
    border: none;
    border-radius: 7px;
    font-family: inherit;
    font-size: 19.5px;
    box-shadow: 0 6px 16px rgba(0, 0, 0, 0.13);
}

.btn svg {
    width: 18px;
    height: 18px;
}

.btn--blue {
    background: #0d6efd;
    color: #fff;
}

.btn--blue svg {
    fill: #fff;
}

.btn--yellow {
    padding: 0 13px 0 15px;
    font-size: 18.5px;
    background: #ffc107;
    color: #111;
}

.btn--yellow svg {
    fill: #111;
}

.btn__broom {
    width: 22px !important;
}

.stats {
    margin-top: 43px;
    display: grid;
    grid-template-columns: repeat(4, 1fr);
    gap: 21px;
}

.stat {
    height: 113px;
    box-sizing: border-box;
    padding: 15px 14px;
    display: flex;
    gap: 15px;
    background: #fff;
    border: 2px solid #198754;
    border-radius: 6px;
    box-shadow: 0 2px 8px rgba(0, 0, 0, 0.04);
}

.stat--cyan {
    border-color: #0dcaf0;
    padding-right: 16px;
    gap: 14px;
}

.stat__icon {
    width: 56px;
    height: 61px;
    border-radius: 50%;
    display: flex;
    align-items: center;
    justify-content: center;
    background: linear-gradient(135deg, #20e3a2, #00a9f0);
}

.stat--cyan .stat__icon {
    width: 61px;
    background: linear-gradient(135deg, #18cff2, #84f7ae);
}

.stat__icon svg {
    height: 26px;
    width: 26px;
    fill: #fff;
}

.stat--cyan .stat__icon svg {
    width: 34px;
}

.stat--cyan .stat__text {
    padding-top: 5px;
}

.stat__label {
    font-size: 13px;
    line-height: 22px;
    font-weight: 600;
    color: #3a4656;
}

.stat__value {
    font-size: 24px;
    line-height: 32px;
    font-weight: 700;
    color: #2c3e50;
}

.stat--cyan .stat__value {
    font-size: 16px;
    line-height: 24px;
}

.panel {
    margin-top: 65px;
    background: #fff;
    border-radius: 6px;
    box-shadow: 0 10px 40px rgba(0, 0, 0, 0.1);
}

.panel__head {
    height: 48px;
    padding: 0 16px;
    display: flex;
    align-items: center;
    gap: 12px;
    border-radius: 6px 6px 0 0;
    background: linear-gradient(135deg, #667eea, #764ba2);
}

.panel__head svg {
    width: 19px;
    height: 19px;
    fill: #2c3e50;
}

h2 {
    margin: 0;
    font-size: 19.4px;
    font-weight: 500;
    color: #2c3e50;
}

.panel__body {
    padding: 24px 20px;
    display: grid;
    grid-template-columns: repeat(6, 1fr);
    gap: 20px;
}

.tool {
    height: 150px;
    padding-top: 19px;
    box-sizing: border-box;
    text-align: center;
    border: 1px solid #f7f8f9;
    border-radius: 8px;
}

.tool__icon {
    width: 54px;
    height: 56px;
    margin: 0 auto;
    border-radius: 50%;
    display: flex;
    align-items: center;
    justify-content: center;
}

.tool__icon svg {
    width: 26px;
    height: 26px;
    fill: #fff;
}

.tool__icon--green {
    background: linear-gradient(135deg, #20e3a2, #00a9f0);
}

.tool__icon--purple {
    background: linear-gradient(135deg, #667eea, #764ba2);
}

.tool__icon--orange {
    background: linear-gradient(135deg, #f8cd6e, #fda085);
}

.tool__icon--pink {
    background: #ff7a9f;
}

.tool__icon--cyan {
    background: linear-gradient(135deg, #18cff2, #84f7ae);
}

.tool__icon--dark {
    background: linear-gradient(135deg, #2f2f2f, #0a0a0a);
}

.tool__label {
    margin-top: 11px;
    font-size: 13.5px;
    line-height: 18px;
    font-weight: 600;
    color: #2c3e50;
}

.tool__label span {
    display: block;
}

.watermark {
    position: absolute;
    left: 598px;
    top: 524px;
    width: 164px;
    display: flex;
    flex-direction: column;
    align-items: center;
    color: rgba(190, 192, 198, 0.42);
    font-weight: 700;
    pointer-events: none;
}

.watermark__ar {
    font-size: 46px;
    line-height: 50px;
}

.watermark__en {
    font-family: "Liberation Sans", sans-serif;
    font-size: 26px;
    line-height: 24px;
    font-weight: 700;
}

.sideScroll {
    width: 6px;
    flex-shrink: 0;
    background: #0a1f38;
}

.sideScroll__thumb {
    height: 374px;
    background: #aab8c8;
    border-radius: 0 0 3px 3px;
}

.sidebar {
    width: 228px;
    flex-shrink: 0;
    overflow: hidden;
    background: #011b36;
    color: #fff;
}

.brand {
    height: 94px;
    margin: 0 14px;
    box-sizing: border-box;
    padding: 8px 14px 0 0;
    display: flex;
    align-items: center;
    gap: 7px;
    border-bottom: 1px solid #3c3324;
}

.brand svg {
    width: 21px;
    height: 27px;
    flex-shrink: 0;
    fill: #ffd21f;
}

.brand__name {
    font-size: 16px;
    line-height: 30px;
    font-weight: 700;
}

.menu {
    margin: 8px 25px 0;
}

.menu__item {
    box-sizing: border-box;
    padding: 0 9px 2px 8px;
    display: flex;
    align-items: center;
    justify-content: space-between;
    border-top: 1px solid rgba(255, 255, 255, 0.05);
}

.menu__item:first-child {
    padding-top: 3px;
    padding-bottom: 0;
}

.menu__text {
    font-size: 12.8px;
    line-height: 21px;
    white-space: pre;
    color: #e6ebf2;
}

.menu__icon {
    width: 16px;
    height: 13px;
    margin-left: 13px;
    vertical-align: -2px;
    fill: #8d9bb0;
}

.menu__arrow {
    width: 12px;
    height: 12px;
    flex-shrink: 0;
    fill: #fff;
}

.pageScroll {
    width: 14px;
    flex-shrink: 0;
    background: #fff;
    display: flex;
    flex-direction: column;
    align-items: center;
}

.pageScroll__up {
    margin-top: 3px;
    width: 0;
    height: 0;
    border-left: 5px solid transparent;
    border-right: 5px solid transparent;
    border-bottom: 6px solid #8f8f8f;
}

.pageScroll__thumb {
    margin-top: 5px;
    width: 9px;
    height: 334px;
    border-radius: 5px;
    background: #8f8f8f;
}

.pageScroll__down {
    margin-top: auto;
    margin-bottom: 5px;
    width: 0;
    height: 0;
    border-left: 5px solid transparent;
    border-right: 5px solid transparent;
    border-top: 6px solid #8f8f8f;
}
</style>

<style>
html,
body {
    margin: 0;
    overflow: hidden;
}
</style>
